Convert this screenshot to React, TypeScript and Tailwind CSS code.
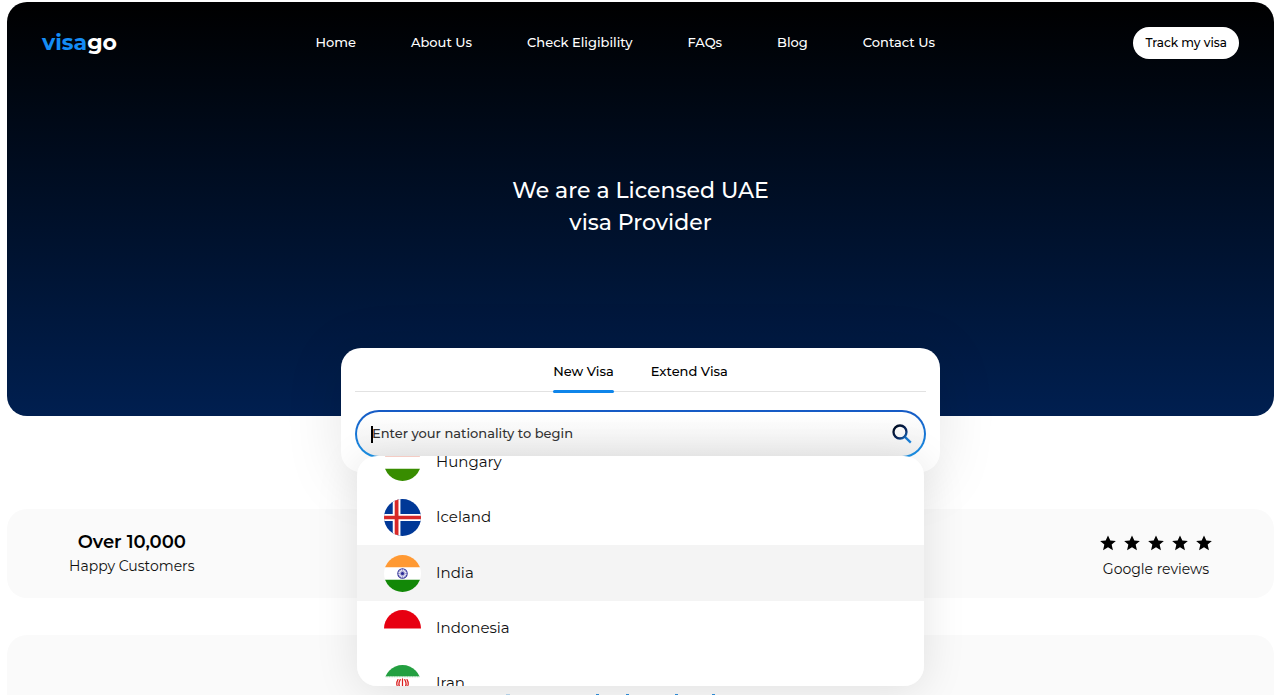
import { useLayoutEffect, useRef, useState } from "react";
import type { ReactNode } from "react";

const navItems = ["Home", "About Us", "Check Eligibility", "FAQs", "Blog", "Contact Us"];

function Flag({ id, children }: { id: string; children: ReactNode }) {
  return (
    <svg viewBox="0 0 36 36" className="size-[37px] shrink-0" aria-hidden="true">
      <clipPath id={id}>
        <circle cx="18" cy="18" r="18" />
      </clipPath>
      <g clipPath={`url(#${id})`}>{children}</g>
    </svg>
  );
}

const spokes = Array.from({ length: 12 }, (_, i) => i * 30);

const countries: { name: string; flag: ReactNode }[] = [
  {
    name: "Hungary",
    flag: (
      <>
        <path fill="#fff" d="M0 0h36v36H0z" />
        <path fill="#d43516" d="M0 0h36v12H0z" />
        <path fill="#388d00" d="M0 24h36v12H0z" />
      </>
    ),
  },
  {
    name: "Iceland",
    flag: (
      <>
        <path fill="#003897" d="M0 0h36v36H0z" />
        <path fill="#fff" d="M8.5 0h7.5v36H8.5zM0 14.5h36v7H0z" />
        <path fill="#d72828" d="M10.4 0h3.7v36h-3.7zM0 16.2h36v3.6H0z" />
      </>
    ),
  },
  {
    name: "India",
    flag: (
      <>
        <path fill="#fff" d="M0 0h36v36H0z" />
        <path fill="#ff9933" d="M0 0h36v12H0z" />
        <path fill="#128807" d="M0 24h36v12H0z" />
        <circle cx="18" cy="18" r="4.6" fill="none" stroke="#2f2f98" strokeWidth="1" />
        <circle cx="18" cy="18" r="1.5" fill="#2f2f98" />
        {spokes.map((a) => (
          <path key={a} d="M18 18v-4.4" stroke="#2f2f98" strokeWidth="0.4" transform={`rotate(${a} 18 18)`} />
        ))}
      </>
    ),
  },
  {
    name: "Indonesia",
    flag: (
      <>
        <path fill="#fff" d="M0 0h36v36H0z" />
        <path fill="#e70011" d="M0 0h36v18H0z" />
      </>
    ),
  },
  {
    name: "Iran",
    flag: (
      <>
        <path fill="#fff" d="M0 0h36v36H0z" />
        <path fill="#239f40" d="M0 0h36v11H0z" />
        <path stroke="#8fcd9e" strokeWidth="1.2" strokeDasharray="1 0.6" d="M0 11.4h36" />
        <path fill="#da0000" d="M0 25h36v11H0z" />
        <g fill="none" stroke="#da2020" strokeWidth="1.2" strokeLinecap="round">
          <path d="M18 13.5v10M15.8 14.2c-1.8 3-1.6 6.5.8 8.8M20.2 14.2c1.8 3 1.6 6.5-.8 8.8M13.6 14.2c-2 3-1.6 6.8 1.4 9M22.4 14.2c2 3 1.6 6.8-1.4 9" />
        </g>
      </>
    ),
  },
];

function SearchIcon() {
  return (
    <svg viewBox="0 0 20 20" className="size-5" fill="none" strokeWidth="2.3" aria-hidden="true">
      <defs>
        <linearGradient id="glass" gradientUnits="userSpaceOnUse" x1="2" y1="2" x2="19" y2="19">
          <stop offset="0" stopColor="#000a1c" />
          <stop offset="0.5" stopColor="#0b2c66" />
          <stop offset="0.7" stopColor="#1773c9" />
          <stop offset="1" stopColor="#1b86e0" />
        </linearGradient>
      </defs>
      <circle cx="8" cy="8" r="6.5" stroke="url(#glass)" />
      <path d="M12.4 12.4l6.4 6.2" stroke="url(#glass)" />
    </svg>
  );
}

function Star() {
  return (
    <svg viewBox="0 0 24 24" className="size-4" aria-hidden="true">
      <path d="M12 .6l3.5 7.6 8.3.8-6.3 5.4 1.9 8.4L12 18.5l-7.4 4.3 1.9-8.4L.2 9l8.3-.8z" />
    </svg>
  );
}

function Tab({ label, active, onSelect }: { label: string; active: boolean; onSelect: () => void }) {
  return (
    <button
      type="button"
      role="tab"
      aria-selected={active}
      onClick={onSelect}
      className="relative -mb-px h-[44px] pt-1 text-[13px] font-medium"
    >
      {label}
      {active && <span className="absolute inset-x-0 -bottom-px h-[3px] rounded-full bg-[#0f85ea]" />}
    </button>
  );
}

function CountryList() {
  const list = useRef<HTMLUListElement>(null);
  useLayoutEffect(() => {
    if (list.current) list.current.scrollTop = 21;
  }, []);
  return (
    <ul
      ref={list}
      id="countries"
      role="listbox"
      aria-label="Nationality"
      className="absolute inset-x-4 top-[108px] z-10 h-[230px] overflow-y-auto rounded-[20px] bg-white shadow-[0_4px_44px_rgba(0,0,0,0.11)] [scrollbar-width:none]"
    >
      {countries.map((c) => (
        <li
          key={c.name}
          role="option"
          aria-selected={c.name === "India"}
          className="flex h-[55px] items-center gap-[15px] px-[27px] text-[15px] text-[#111] aria-selected:h-[56px] aria-selected:bg-[#f4f4f4]"
        >
          <Flag id={`flag-${c.name}`}>{c.flag}</Flag>
          {c.name}
        </li>
      ))}
    </ul>
  );
}

export default function App() {
  const [tab, setTab] = useState("New Visa");
  return (
    <div className="flex min-h-screen flex-col bg-white pr-[6px] pl-[7px] pt-[2px] font-[Montserrat,Inter,sans-serif] text-black">
      <header className="rounded-[20px] bg-linear-to-b/srgb from-black to-[#001f50] pb-[177px] text-white">
        <div className="flex items-center justify-between px-[35px] pt-[25px]">
          <a href="#" className="text-[22px] leading-[30px] font-bold">
            <span className="text-[#148cf5]">visa</span>go
          </a>
          <nav className="flex gap-[55px] text-[13px] font-medium">
            {navItems.map((n) => (
              <a key={n} href="#">
                {n}
              </a>
            ))}
          </nav>
          <button type="button" className="h-8 rounded-full bg-white px-3 text-[12px] font-medium text-black">
            Track my visa
          </button>
        </div>
        <h1 className="mt-[116px] text-center text-[22px] leading-8 font-medium">
          We are a Licensed UAE
          <br />
          visa Provider
        </h1>
      </header>

      <section className="relative mx-auto -mt-[68px] w-full max-w-[599px] rounded-[20px] bg-white px-[14px] pb-[14px] shadow-[0_8px_60px_rgba(0,0,0,0.1)]">
        <div role="tablist" className="flex justify-center gap-[37px] border-b border-[#e2e2e2]">
          {["New Visa", "Extend Visa"].map((t) => (
            <Tab key={t} label={t} active={t === tab} onSelect={() => setTab(t)} />
          ))}
        </div>
        <div className="mt-[18px] rounded-full bg-linear-to-b/srgb from-[#1559c4] to-[#1b93e6] p-[2px]">
          <div className="relative flex h-[44px] items-center rounded-full bg-linear-to-b/srgb from-white to-[#f0f0f0] pr-3 pl-[15px]">
            <span className="absolute left-[14px] h-[17px] w-[2px] bg-black" />
            <input
              type="text"
              aria-label="Nationality"
              aria-controls="countries"
              placeholder="Enter your nationality to begin"
              className="min-w-0 flex-1 bg-transparent text-[13px] font-medium caret-transparent outline-none placeholder:text-[#333]"
            />
            <button type="button" aria-label="Search">
              <SearchIcon />
            </button>
          </div>
        </div>
        <CountryList />
      </section>

      <section className="mt-[37px] flex h-[89px] items-center justify-between rounded-[20px] bg-[#fafafa] px-[62px] text-center">
        <div className="pt-px">
          <p className="text-[18px] leading-6 font-semibold">Over 10,000</p>
          <p className="text-[14px] leading-6 text-[#111]">Happy Customers</p>
        </div>
        <div className="pt-2">
          <div className="flex justify-center gap-2" role="img" aria-label="5 stars">
            {[1, 2, 3, 4, 5].map((n) => (
              <Star key={n} />
            ))}
          </div>
          <p className="mt-[6px] text-[14px] leading-6 text-[#111]">Google reviews</p>
        </div>
      </section>

      <section className="mt-[37px] flex flex-1 flex-col items-center justify-end rounded-t-[20px] bg-[#fafafa]">
        <svg viewBox="0 0 280 2" className="h-[2px] w-[280px]" fill="#2f8fdc" aria-hidden="true">
          <path d="M95 1h3v1h-3zM125 1h3v1h-3zM174 1h3v1h-3zM211 1h3v1h-3z" />
          <path d="M5 1h4v1H5z" opacity="0.3" />
        </svg>
      </section>
    </div>
  );
}
